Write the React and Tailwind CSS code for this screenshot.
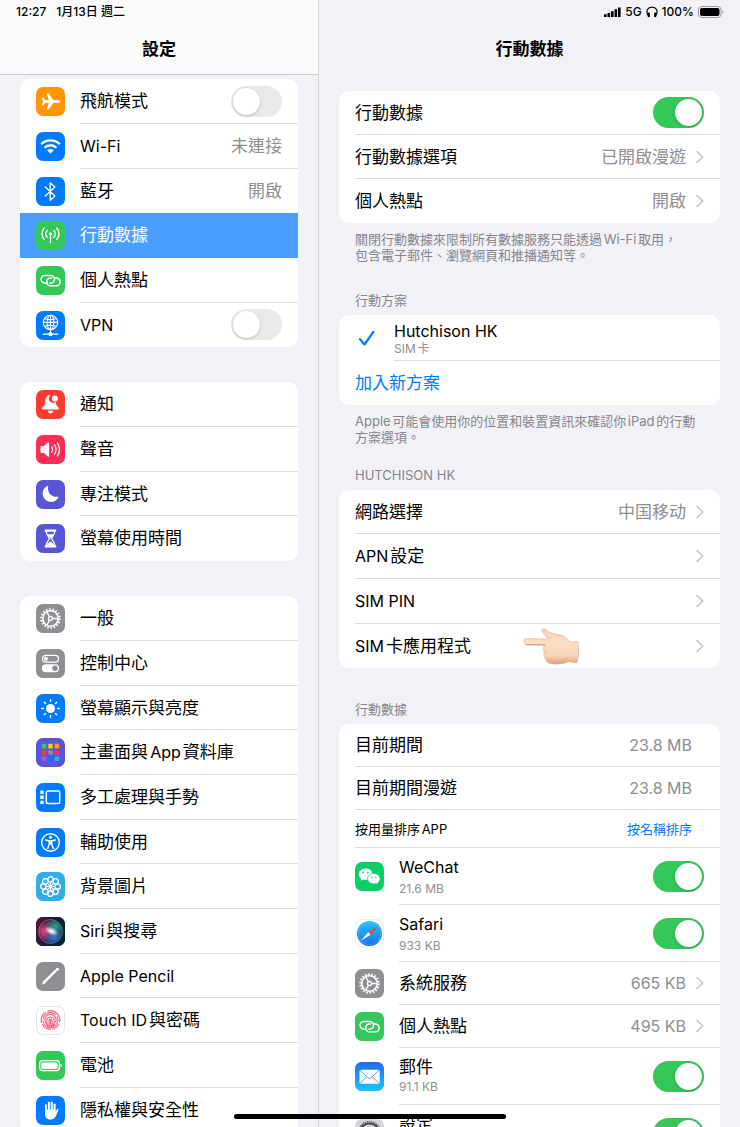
import { useState } from 'react';
import clsx from 'clsx';

/* ---------- glyphs, all on the 29px tile grid ---------- */

const stroke = { fill: 'none', stroke: 'currentColor', strokeLinecap: 'round', strokeLinejoin: 'round' };

const Gear = () => (
  <g fill="none" stroke="currentColor">
    <circle cx="14.5" cy="14.5" r="9.3" strokeWidth="2" strokeDasharray="1.6 1.646" />
    <circle cx="14.5" cy="14.5" r="7.7" strokeWidth="1.6" />
    <circle cx="14.5" cy="14.5" r="2" strokeWidth="1.3" />
    <path d="M16.6 14.5h5.4M13.5 12.7 10.8 8M13.5 16.3 10.8 21" strokeWidth="1.4" />
  </g>
);

const ChainLinks = () => (
  <g {...stroke} strokeWidth="1.5">
    <path d="M10.8 17.200H9a3.900 3.900 0 0 1 0-7.800h5.600a3.900 3.900 0 0 1 3.900 3.900 3.900 3.900 0 0 1-3.900 3.900h-.8" />
    <path d="M18.800 12h1.400a3.900 3.900 0 0 1 0 7.800h-5.600a3.900 3.900 0 0 1-3.900-3.900 3.900 3.900 0 0 1 3.900-3.900h.8" />
  </g>
);

const petals = [0, 45, 90, 135, 180, 225, 270, 315];

const glyphs = {
  airplane: (
    <path
      fill="currentColor"
      d="M24.2 14.5c0 .9-1.4 1.6-2.9 1.6h-3.9l-4.5 6.1c-.2.3-.5.4-.8.4h-.9c-.3 0-.5-.3-.4-.6l2-5.9H9.2l-1.6 2c-.2.2-.4.3-.6.3h-.6c-.3 0-.5-.3-.4-.6l1-3.3-1-3.3c-.1-.3.1-.6.4-.6H7c.2 0 .4.1.6.3l1.6 2h3.6l-2-5.9c-.1-.3.1-.6.4-.6h.9c.3 0 .6.1.8.4l4.5 6.1h3.9c1.5 0 2.9.7 2.9 1.6z"
    />
  ),
  wifi: (
    <g>
      <g {...stroke} strokeLinecap="butt" strokeWidth="2.3">
        <path d="M5.2 12.3a13.2 13.2 0 0 1 18.6 0" />
        <path d="M8.6 15.7a8.3 8.3 0 0 1 11.8 0" />
      </g>
      <path fill="currentColor" d="M11.2 18.3a4.7 4.7 0 0 1 6.6 0l-3.3 3.4z" />
    </g>
  ),
  bluetooth: <path {...stroke} strokeWidth="1.3" d="m9.3 10 9.6 9-4.7 4.2V5.8l4.7 4.2-9.6 9" />,
  antenna: (
    <g {...stroke} strokeWidth="1.4">
      <circle cx="14.5" cy="12.8" r="1.5" fill="currentColor" stroke="none" />
      <path d="M14.5 13v8.5M11.2 16.2a4.6 4.6 0 0 1 0-6.8M17.8 16.2a4.6 4.6 0 0 0 0-6.8M8.3 18.5a8.2 8.2 0 0 1 0-11.4M20.7 18.5a8.2 8.2 0 0 0 0-11.4" />
    </g>
  ),
  hotspot: <ChainLinks />,
  vpn: (
    <g {...stroke} strokeWidth="1.1">
      <circle cx="14.5" cy="11.4" r="7.2" />
      <ellipse cx="14.5" cy="11.4" rx="3.4" ry="7.2" />
      <path d="M14.5 4.2v18.3M7.3 11.4h14.4M8.6 7.4c3.8 1.6 8 1.6 11.8 0M8.6 15.4c3.8-1.6 8-1.6 11.8 0" />
      <path d="M7.2 23.2h14.6" strokeWidth="1.3" />
      <circle cx="14.5" cy="23.2" r="1.6" fill="currentColor" />
    </g>
  ),
  bell: (
    <g fill="currentColor">
      <path d="M14.6 5.1a3.9 3.9 0 0 0 4.9 7c.4 1.9 1 3.5 2.3 4.7.6.6 1 1 1 1.7 0 .5-.4.9-1.1.9H7.2c-.7 0-1.1-.4-1.1-.9 0-.7.4-1.1 1-1.7 1.8-1.8 2.1-4.2 2.4-6.9.2-2.3 1.7-4.4 3.4-4.7z" />
      <circle cx="18.9" cy="8.6" r="3" />
      <path d="M11.9 20.7h5.2c0 3.7-5.2 3.7-5.2 0z" />
    </g>
  ),
  speaker: (
    <g>
      <path fill="currentColor" d="M4.5 11.9c0-.5.3-.8.8-.8h2.6l3.9-3.5c.6-.5 1.3-.2 1.3.5v12.8c0 .7-.7 1-1.3.5l-3.9-3.5H5.3c-.5 0-.8-.3-.8-.8z" />
      <path {...stroke} strokeWidth="1.3" d="M15.800 11.900a5 5 0 0 1 0 5.200M18.600 9.900a8.600 8.600 0 0 1 0 9.200M21.400 8a12 12 0 0 1 0 13" />
    </g>
  ),
  moon: <path fill="currentColor" d="M12.2 6.2c-1.2 5.9 2.7 11.2 9.7 10.6.5 0 .7.3.5.7a8.4 8.4 0 1 1-11-11.600c.5-.2.9-.1.8.3z" />,
  hourglass: (
    <g>
      <path fill="currentColor" d="M8.8 5.5h11.4v2.2H8.800zM8.800 21.300h11.400v2.200H8.800z" />
      <path {...stroke} strokeWidth="1.3" d="M10.3 7.5c0 4 3 5.2 3 7s-3 3-3 7M18.700 7.500c0 4-3 5.200-3 7s3 3 3 7" />
      <path fill="currentColor" d="M11.3 10.3h6.4c-.8 2-2.4 2.600-2.600 4.200h-1.200c-.2-1.600-1.800-2.200-2.600-4.200zM11 21.500c.3-2.300 2-2.500 3.500-4.300 1.500 1.800 3.200 2 3.500 4.300z" />
    </g>
  ),
  gear: <Gear />,
  toggles: (
    <g>
      <rect {...stroke} strokeWidth="1.3" x="6.500" y="6.300" width="16" height="6.800" rx="3.400" />
      <circle cx="10" cy="9.700" r="2" fill="currentColor" />
      <rect x="5.900" y="15.300" width="17.200" height="8" rx="4" fill="currentColor" />
      <circle cx="19" cy="19.300" r="2.700" fill="#8e8e93" />
    </g>
  ),
  sun: (
    <g>
      <circle cx="14.5" cy="14.5" r="4.5" fill="currentColor" />
      {petals.map((a) => (
        <path key={a} {...stroke} strokeWidth="1.5" d="M14.5 7.500V5.700" transform={`rotate(${a} 14.5 14.5)`} />
      ))}
    </g>
  ),
  grid: (
    <g>
      {['#34c759', '#ffcc00', '#ff9f0a', '#ff3b30', '#8e8e93', '#ff2d55', '#af52de', '#007aff', '#32ade6'].map((c, i) => (
        <rect key={c} x={5.8 + (i % 3) * 6.4} y={5.8 + Math.floor(i / 3) * 6.4} width="4.6" height="4.6" rx="1" fill={c} />
      ))}
    </g>
  ),
  multitask: (
    <g>
      <rect {...stroke} strokeWidth="1.4" x="10.3" y="8" width="13.5" height="12.5" rx="1.8" />
      <path fill="currentColor" d="M4.3 7.500h3.400v3.400H4.300zM4.300 12.600h3.400V16H4.300zM4.300 17.700h3.400v3.400H4.300z" />
    </g>
  ),
  accessibility: (
    <g>
      <circle {...stroke} cx="14.5" cy="14.5" r="8.8" strokeWidth="1.4" />
      <circle cx="14.5" cy="9.3" r="1.5" fill="currentColor" />
      <path {...stroke} strokeWidth="1.5" d="m9.700 12 3.600.9v3.100l-1.600 4.400M19.300 12l-3.600.9v3.100l1.600 4.400" />
      <path fill="currentColor" d="M13 12.300h3v4.500h-3z" />
    </g>
  ),
  flower: (
    <g {...stroke} strokeWidth="1.3">
      {petals.map((a) => (
        <circle key={a} cx="14.5" cy="7.300" r="2.700" transform={`rotate(${a} 14.5 14.5)`} />
      ))}
      {petals.map((a) => (
        <path key={`l${a}`} d="M14.5 14.500v-4" strokeWidth="1.100" transform={`rotate(${a} 14.5 14.5)`} />
      ))}
      <circle cx="14.5" cy="14.5" r="1.5" fill="currentColor" stroke="none" />
    </g>
  ),
  siri: (
    <g>
      <defs>
        <linearGradient id="siriBase" x1="0" y1="0.2" x2="1" y2="0.6">
          <stop offset="0" stopColor="#5b1233" />
          <stop offset="0.5" stopColor="#1a1a35" />
          <stop offset="1" stopColor="#06272e" />
        </linearGradient>
        <radialGradient id="siriPink" cx="0.25" cy="0.5" r="0.5">
          <stop offset="0" stopColor="#f0417f" />
          <stop offset="1" stopColor="#f0417f" stopOpacity="0" />
        </radialGradient>
        <radialGradient id="siriTeal" cx="0.7" cy="0.3" r="0.45">
          <stop offset="0" stopColor="#2fa78b" />
          <stop offset="1" stopColor="#2fa78b" stopOpacity="0" />
        </radialGradient>
        <radialGradient id="siriBlue" cx="0.65" cy="0.75" r="0.45">
          <stop offset="0" stopColor="#2f7bd8" />
          <stop offset="1" stopColor="#2f7bd8" stopOpacity="0" />
        </radialGradient>
        <radialGradient id="siriCore">
          <stop offset="0" stopColor="#fff" />
          <stop offset="0.3" stopColor="#fff" stopOpacity="0.8" />
          <stop offset="1" stopColor="#fff" stopOpacity="0" />
        </radialGradient>
      </defs>
      <rect width="29" height="29" fill="url(#siriBase)" />
      <circle cx="14.5" cy="14.5" r="12" fill="url(#siriPink)" />
      <circle cx="14.5" cy="14.5" r="12" fill="url(#siriTeal)" />
      <circle cx="14.5" cy="14.5" r="12" fill="url(#siriBlue)" />
      <circle cx="14.5" cy="14.5" r="12" fill="none" stroke="#9fb6c8" strokeOpacity="0.5" strokeWidth="0.8" />
      <ellipse cx="15.5" cy="14.2" rx="7.5" ry="4" fill="url(#siriCore)" transform="rotate(25 15.5 14.2)" />
    </g>
  ),
  pencil: (
    <g>
      <path {...stroke} strokeWidth="2.4" d="M8.800 19.700 19.500 8.900" />
      <path fill="currentColor" d="m5.900 22.700 1.700-4.200 2.500 2.400z" />
      <circle cx="21.3" cy="7.3" r="1.6" fill="currentColor" />
    </g>
  ),
  fingerprint: (
    <g fill="none" stroke="#f4587a" strokeWidth="1.1">
      <circle cx="14.5" cy="14" r="9.3" strokeDasharray="13 1.5 20 1.5 9 1.500 10.500 1.500" transform="rotate(160 14.5 14)" />
      <circle cx="14.5" cy="14" r="7.4" strokeDasharray="17 1.500 15 1.500 10 1.500" transform="rotate(185 14.5 14)" />
      <circle cx="14.5" cy="14" r="5.5" strokeDasharray="24 1.500 7.500 1.500" transform="rotate(130 14.5 14)" />
      <path strokeLinecap="round" d="M12.300 21.700c-1.300-2.300-1.700-4.800-1.400-7.500.5-4.200 6.900-4.200 7.200 0 .2 2.500 0 4.800-1 7.300M14.500 22.600c-1.300-2.500-1.700-5.500-1.600-8 .1-2 3.100-2 3.200 0 .1 2.500-.1 4.500-.7 6.600M14.500 14.500v3.500" />
    </g>
  ),
  battery: (
    <g>
      <rect {...stroke} strokeWidth="1.3" x="3.600" y="9.700" width="19.800" height="9.900" rx="2.800" />
      <rect x="5.300" y="11.400" width="16.400" height="6.500" rx="1.400" fill="currentColor" />
      <path fill="currentColor" d="M24.500 12.800c1.500.5 1.500 3.200 0 3.700z" />
    </g>
  ),
  hand: (
    <g>
      <path {...stroke} strokeWidth="2" d="M10 9.200v8M12.900 6.700v9M15.800 6.500v9M18.600 8.500v9" />
      <path fill="currentColor" d="M9 13.500h10.600v2.200c.7-1.300 1.200-2.200 1.800-2.700.6-.4 1.300-.1 1 .7l-2.100 5.500c-1 2.600-2.600 4.300-5.600 4.300-3.400 0-5.700-2-5.700-5.600z" />
    </g>
  ),
  wechat: (
    <g>
      <path fill="#fff" d="M10.6 6.500c-3.900 0-6.900 2.500-6.900 5.700 0 1.800 1 3.300 2.500 4.400l-.6 2.100 2.400-1.300c.8.300 1.700.400 2.600.400 3.900 0 6.900-2.500 6.900-5.600s-3-5.700-6.900-5.700z" />
      <path fill="#fff" stroke="#08cf68" strokeWidth="0.7" d="M18.900 11.500c-3.600 0-6.300 2.300-6.300 5.200s2.700 5.200 6.300 5.200c.8 0 1.500-.1 2.200-.3l2.100 1.200-.5-1.900c1.500-1 2.400-2.500 2.400-4.200 0-2.900-2.700-5.200-6.200-5.200z" />
      <g fill="#08cf68">
        <circle cx="8.3" cy="10.5" r="0.9" />
        <circle cx="12.9" cy="10.5" r="0.9" />
        <circle cx="16.9" cy="15.2" r="0.75" />
        <circle cx="20.9" cy="15.2" r="0.75" />
      </g>
    </g>
  ),
  safari: (
    <g>
      <defs>
        <linearGradient id="safariDial" x1="0" y1="0" x2="0" y2="1">
          <stop offset="0" stopColor="#1cc6fa" />
          <stop offset="1" stopColor="#1d6fe8" />
        </linearGradient>
      </defs>
      <circle cx="14.5" cy="14.5" r="12.6" fill="url(#safariDial)" />
      <circle cx="14.5" cy="14.5" r="11.2" fill="none" stroke="#fff" strokeOpacity="0.6" strokeWidth="1.2" strokeDasharray="0.4 1.359" />
      <path fill="#ff3b30" d="M22.800 7.500 13.400 13l2.200 2.800z" />
      <path fill="#fff" d="m5.600 21.900 7.800-8.900 2.200 2.800z" />
    </g>
  ),
  mail: (
    <g>
      <defs>
        <linearGradient id="mailBase" x1="0" y1="0" x2="0" y2="1">
          <stop offset="0" stopColor="#1e6bf2" />
          <stop offset="1" stopColor="#1bc3fb" />
        </linearGradient>
      </defs>
      <rect width="29" height="29" fill="url(#mailBase)" />
      <rect x="4.5" y="7.8" width="20.2" height="14" rx="1.6" fill="#fff" />
      <path fill="none" stroke="#3d95f5" strokeWidth="0.9" d="m5 8.200 8 7.500c.9.800 2.200.8 3.100 0l8-7.500M5 21.500l6.700-6.700M24.200 21.500l-6.800-6.700" />
    </g>
  ),
  settings: (
    <g fill="none" stroke="#48484c">
      <circle cx="14.5" cy="14.5" r="11.8" strokeWidth="1.4" strokeDasharray="1 0.95" />
      <circle cx="14.5" cy="14.5" r="10" strokeWidth="2.2" />
      <circle cx="14.5" cy="14.5" r="4.5" strokeWidth="1.5" />
    </g>
  ),
};

const Tile = ({ name, className }) => (
  <span className={clsx('block size-[29px] shrink-0 overflow-hidden rounded-[7px] text-white', className)}>
    <svg viewBox="0 0 29 29" className="size-full" aria-hidden="true">
      {glyphs[name]}
    </svg>
  </span>
);

const Chevron = () => (
  <svg viewBox="0 0 8 14" className="h-[14px] w-2 shrink-0 text-[#c4c4c7]" aria-hidden="true">
    <path {...stroke} strokeWidth="1.6" d="m1 1.500 5.700 5.500L1 12.500" />
  </svg>
);

const PointingHand = () => (
  <svg viewBox="0 0 56 38" className="pointer-events-none absolute top-1 left-[184px] h-[38px] w-14" aria-hidden="true">
    <defs>
      <linearGradient id="skin" x1="0" y1="0" x2="0" y2="1">
        <stop offset="0" stopColor="#f7d3b4" />
        <stop offset="0.4" stopColor="#fbdfc6" />
        <stop offset="0.75" stopColor="#f8d5b8" />
        <stop offset="1" stopColor="#e0a17a" />
      </linearGradient>
    </defs>
    <path
      fill="url(#skin)"
      stroke="#e0ab86"
      strokeWidth="0.6"
      d="M1 13.200C.8 11.500 2 10.500 3.500 10.600L21.500 11C23 11 24.300 10.500 24 9 22 7.500 19 5 18.800 3 18.600 1 20.500.3 22 1.200 25 3.200 28 5.500 32 6 37 6.500 41 7.500 43.500 10.500L46.500 13.800C49 14.200 52 13.500 54.800 13.500 56 20 56 27 54 34.500 51 35 48.500 33.800 46 33.500 42 35.500 36 36.500 30 36 25 35.600 22.800 33.500 22.800 30.500 21 29 20.600 26 21.300 23.500 20 21.500 20.600 18.500 21.800 17L4 16.800C2 16.800 1 15 1 13.200z"
    />
    <path {...stroke} stroke="#cf946d" strokeWidth="0.9" d="M3.500 16.800h18.300" />
    <path {...stroke} stroke="#e8bb99" strokeWidth="0.8" d="M24 9c1.500 1 3 1.500 4.500 1.500M21.500 23.700c1 .6 2.200.7 3.300.4M23 30.500c1.200.4 2.200.3 3.200 0" />
  </svg>
);

/* ---------- building blocks ---------- */

// Latin runs sit one step smaller than the Chinese text beside them
const Mixed = ({ text }) =>
  text.split(/([\x20-\x7e]+)/).map((part, i) =>
    i % 2 ? (
      <span key={i} className="text-base">
        {part}
      </span>
    ) : (
      part
    ),
  );

const Switch = ({ id, on = false }) => {
  const [checked, setChecked] = useState(on);
  return (
    <input
      id={id}
      type="checkbox"
      role="switch"
      checked={checked}
      onChange={(e) => setChecked(e.target.checked)}
      className="h-[31px] w-[51px] shrink-0 cursor-pointer appearance-none rounded-full bg-[#e9e9eb] p-0.5 transition-colors before:block before:size-[27px] before:rounded-full before:bg-white before:shadow-[0_1px_3px_rgba(0,0,0,0.2)] before:transition-transform checked:bg-[#34c759] checked:before:translate-x-5"
    />
  );
};

const Card = ({ children }) => <div className="overflow-hidden rounded-[10px] bg-white">{children}</div>;

const SideRow = ({ item, last, active, beforeActive }) => {
  const isSwitch = item.type === 'switch';
  const Tag = isSwitch ? 'label' : 'a';
  const link = isSwitch ? { htmlFor: item.icon } : { href: `#${item.icon}` };
  return (
    <Tag
      {...link}
      className={clsx('flex h-[45px] items-center gap-[15px] pl-4 nth-[3n]:h-11', active && 'bg-[#4a9eff] text-white')}
    >
      <Tile name={item.icon} className={item.tile} />
      <span
        className={clsx(
          'flex h-full min-w-0 flex-1 items-center justify-between border-b pr-4',
          last || active || beforeActive ? 'border-transparent' : 'border-[#dcdcdf]',
        )}
      >
        <span className="truncate">
          <Mixed text={item.label} />
        </span>
        {item.value && <span className="text-[#8e8e93]">{item.value}</span>}
        {isSwitch && <Switch id={item.icon} />}
      </span>
    </Tag>
  );
};

const Row = ({ label, value, href, last, children }) => (
  <a href={href} className="relative block pl-4">
    <span className={clsx('flex h-full items-center gap-[10px] pr-4', !last && 'border-b border-[#dcdcdf]')}>
      <span className="flex-1">
        <Mixed text={label} />
      </span>
      {value && <span className="text-[#8e8e93]">{value}</span>}
      <Chevron />
    </span>
    {children}
  </a>
);

const AppRow = ({ app }) => (
  <div className={clsx('flex items-center gap-[15px] pl-4', app.chevron ? 'h-[43px]' : 'h-[57px]')}>
    <Tile name={app.icon} className={app.tile} />
    <div className="flex h-full flex-1 items-center border-b border-[#dcdcdf] pr-4">
      {app.chevron ? (
        <a href={`#${app.name}`} className="flex flex-1 items-center gap-[10px]">
          <span className="flex-1">{app.name}</span>
          <span className="text-base text-[#8e8e93]">{app.usage}</span>
          <Chevron />
        </a>
      ) : (
        <>
          <label htmlFor={`app-${app.icon}`} className="flex flex-1 flex-col pt-0.5 leading-5">
            <span>
              <Mixed text={app.name} />
            </span>
            <span className="h-5 text-[12px] text-[#8e8e93]">{app.usage}</span>
          </label>
          <Switch id={`app-${app.icon}`} on />
        </>
      )}
    </div>
  </div>
);

const SectionTitle = ({ children }) => (
  <h2 className="px-4 pb-[7px] text-[13px] leading-4 text-[#85858b]">{children}</h2>
);

const Note = ({ children }) => <p className="px-4 pt-2 text-[13px] leading-4 text-[#85858b]">{children}</p>;

/* ---------- data ---------- */

const groups = [
  [
    { icon: 'airplane', label: '飛航模式', tile: 'bg-[#ff9500]', type: 'switch' },
    { icon: 'wifi', label: 'Wi-Fi', tile: 'bg-[#007aff]', value: '未連接' },
    { icon: 'bluetooth', label: '藍牙', tile: 'bg-[#007aff]', value: '開啟' },
    { icon: 'antenna', label: '行動數據', tile: 'bg-[#34c759]' },
    { icon: 'hotspot', label: '個人熱點', tile: 'bg-[#34c759]' },
    { icon: 'vpn', label: 'VPN', tile: 'bg-[#007aff]', type: 'switch' },
  ],
  [
    { icon: 'bell', label: '通知', tile: 'bg-[#ff3b30]' },
    { icon: 'speaker', label: '聲音', tile: 'bg-[#ff2d55]' },
    { icon: 'moon', label: '專注模式', tile: 'bg-[#5856d6]' },
    { icon: 'hourglass', label: '螢幕使用時間', tile: 'bg-[#5856d6]' },
  ],
  [
    { icon: 'gear', label: '一般', tile: 'bg-[#8e8e93]' },
    { icon: 'toggles', label: '控制中心', tile: 'bg-[#8e8e93]' },
    { icon: 'sun', label: '螢幕顯示與亮度', tile: 'bg-[#007aff]' },
    { icon: 'grid', label: '主畫面與App資料庫', tile: 'bg-[#5856d6]' },
    { icon: 'multitask', label: '多工處理與手勢', tile: 'bg-[#007aff]' },
    { icon: 'accessibility', label: '輔助使用', tile: 'bg-[#007aff]' },
    { icon: 'flower', label: '背景圖片', tile: 'bg-[#32ade6]' },
    { icon: 'siri', label: 'Siri與搜尋', tile: 'bg-black' },
    { icon: 'pencil', label: 'Apple Pencil', tile: 'bg-[#8e8e93]' },
    { icon: 'fingerprint', label: 'Touch ID與密碼', tile: 'bg-white ring-1 ring-inset ring-[#e5e5e8]' },
    { icon: 'battery', label: '電池', tile: 'bg-[#34c759]' },
    { icon: 'hand', label: '隱私權與安全性', tile: 'bg-[#007aff]' },
  ],
];

const apps = [
  { icon: 'wechat', name: 'WeChat', usage: '21.6 MB', tile: 'bg-[#08cf68]' },
  { icon: 'safari', name: 'Safari', usage: '933 KB', tile: 'bg-white ring-1 ring-inset ring-[#ededf0]' },
  { icon: 'gear', name: '系統服務', usage: '665 KB', tile: 'bg-[#8e8e93]', chevron: true },
  { icon: 'hotspot', name: '個人熱點', usage: '495 KB', tile: 'bg-[#34c759]', chevron: true },
  { icon: 'mail', name: '郵件', usage: '91.1 KB', tile: 'bg-[#1e90f5]' },
  { icon: 'settings', name: '設定', tile: 'bg-[#d5d5d9]' },
];

/* ---------- page ---------- */

const Sidebar = () => (
  <aside className="flex w-[319px] shrink-0 flex-col border-r border-[#d6d6db]">
    <header className="border-b border-[#cfcfd3] bg-[#fafafb]">
      <div className="flex h-6 items-center gap-[10px] px-4 text-[12px] font-medium [text-autospace:no-autospace]">
        <span>12:27</span>
        <span>1月13日 週二</span>
      </div>
      <h1 className="flex h-[50px] items-center justify-center font-semibold">設定</h1>
    </header>
    <nav className="flex-1 space-y-[35px] overflow-y-auto px-5 pt-1 [scrollbar-width:none]">
      {groups.map((items) => (
        <Card key={items[0].icon}>
          {items.map((item, i) => (
            <SideRow
              key={item.icon}
              item={item}
              last={i === items.length - 1}
              active={item.icon === 'antenna'}
              beforeActive={items[i + 1]?.icon === 'antenna'}
            />
          ))}
        </Card>
      ))}
    </nav>
  </aside>
);

const StatusIcons = () => (
  <div className="flex h-6 items-center justify-end gap-1 pr-4 text-[12px] font-medium">
    <svg viewBox="0 0 17 11" className="h-[11px] w-[17px]" aria-hidden="true">
      <path d="M0 7.200h2.600V10H0zM3.500 6h2.600v4H3.500zM7 4.300h2.600V10H7zM10.500 2.300h2.600V10h-2.600zM14 .500h2.600V10H14z" />
    </svg>
    <span>5G</span>
    <svg viewBox="0 0 12 12" className="size-3" aria-hidden="true">
      <path {...stroke} strokeWidth="1.2" d="M2.200 9.500C-.8 4.500 2 1.200 6 1.200s6.800 3.300 3.800 8.300" />
      <rect x="1.700" y="6.500" width="2.200" height="4.700" rx="1" />
      <rect x="8.100" y="6.500" width="2.200" height="4.700" rx="1" />
    </svg>
    <span>100%</span>
    <svg viewBox="0 0 26 12" className="h-3 w-[26px]" aria-hidden="true">
      <rect x="0.500" y="0.500" width="22.500" height="11" rx="3.300" fill="none" stroke="#9b9b9f" />
      <rect x="2" y="2" width="19.500" height="8" rx="2" />
      <path fill="#9b9b9f" d="M24.200 4c1.500.5 1.500 3.500 0 4z" />
    </svg>
  </div>
);

const Detail = () => (
  <main className="flex min-w-0 flex-1 flex-col">
    <header>
      <StatusIcons />
      <h1 className="flex h-[50px] items-center justify-center font-semibold">行動數據</h1>
    </header>

    <div className="flex-1 overflow-y-auto px-5 pt-[17px] [scrollbar-width:none]">
      <section>
        <Card>
          <div className="h-11 pl-4">
            <div className="flex h-full items-center justify-between border-b border-[#dcdcdf] pr-4">
              <label htmlFor="cellular">行動數據</label>
              <Switch id="cellular" on />
            </div>
          </div>
          <div className="grid auto-rows-[44px]">
            <Row label="行動數據選項" value="已開啟漫遊" href="#options" />
            <Row label="個人熱點" value="開啟" href="#hotspot" last />
          </div>
        </Card>
        <Note>
          關閉行動數據來限制所有數據服務只能透過Wi-Fi取用，
          <br />
          包含電子郵件、瀏覽網頁和推播通知等。
        </Note>
      </section>

      <section className="mt-[29px]">
        <SectionTitle>行動方案</SectionTitle>
        <Card>
          <button type="button" className="flex h-[46px] w-full items-center gap-[15px] pl-4 text-left">
            <svg viewBox="0 0 24 24" className="size-6 text-[#007aff]" aria-hidden="true">
              <path {...stroke} strokeWidth="2.2" d="m5 13.200 4.500 5.300L18.300 6" />
            </svg>
            <span className="flex h-full flex-1 flex-col justify-center border-b border-[#dcdcdf] pt-1 text-base leading-[18px]">
              Hutchison HK
              <span className="text-[12px] leading-[18px] text-[#8e8e93]">SIM卡</span>
            </span>
          </button>
          <button type="button" className="h-11 w-full px-4 text-left text-[#007aff]">
            加入新方案
          </button>
        </Card>
        <Note>Apple可能會使用你的位置和裝置資訊來確認你iPad的行動方案選項。</Note>
      </section>

      <section className="mt-[22px]">
        <SectionTitle>HUTCHISON HK</SectionTitle>
        <Card>
          <div className="grid grid-rows-[44px_45px_45px_44px]">
            <Row label="網路選擇" value="中国移动" href="#network" />
            <Row label="APN設定" href="#apn" />
            <Row label="SIM PIN" href="#pin" />
            <Row label="SIM卡應用程式" href="#sim-apps" last>
              <PointingHand />
            </Row>
          </div>
        </Card>
      </section>

      <section className="mt-[33px]">
        <SectionTitle>行動數據</SectionTitle>
        <Card>
          <dl className="pl-4">
            <div className="flex h-[43px] items-center justify-between border-b border-[#dcdcdf] pr-7">
              <dt>目前期間</dt>
              <dd className="text-base text-[#8e8e93]">23.8 MB</dd>
            </div>
            <div className="flex h-[43px] items-center justify-between border-b border-[#dcdcdf] pr-7">
              <dt>目前期間漫遊</dt>
              <dd className="text-base text-[#8e8e93]">23.8 MB</dd>
            </div>
          </dl>
          <div className="pl-4 text-[13px]">
            <div className="flex h-[38px] items-center justify-between border-b border-[#dcdcdf] pr-7">
              <span>按用量排序APP</span>
              <button type="button" className="text-[#007aff]">
                按名稱排序
              </button>
            </div>
          </div>
          {apps.map((app) => (
            <AppRow key={app.name} app={app} />
          ))}
        </Card>
      </section>
    </div>
  </main>
);

export default function App() {
  return (
    <div className="relative flex h-screen overflow-hidden bg-[#f2f1f7] font-['Inter','Noto_Sans_CJK_TC',sans-serif] text-[17px] leading-6 text-black [text-autospace:normal]">
      <Sidebar />
      <Detail />
      <div className="absolute bottom-2 left-1/2 h-[5px] w-[272px] -translate-x-1/2 rounded-full bg-black" />
    </div>
  );
}
